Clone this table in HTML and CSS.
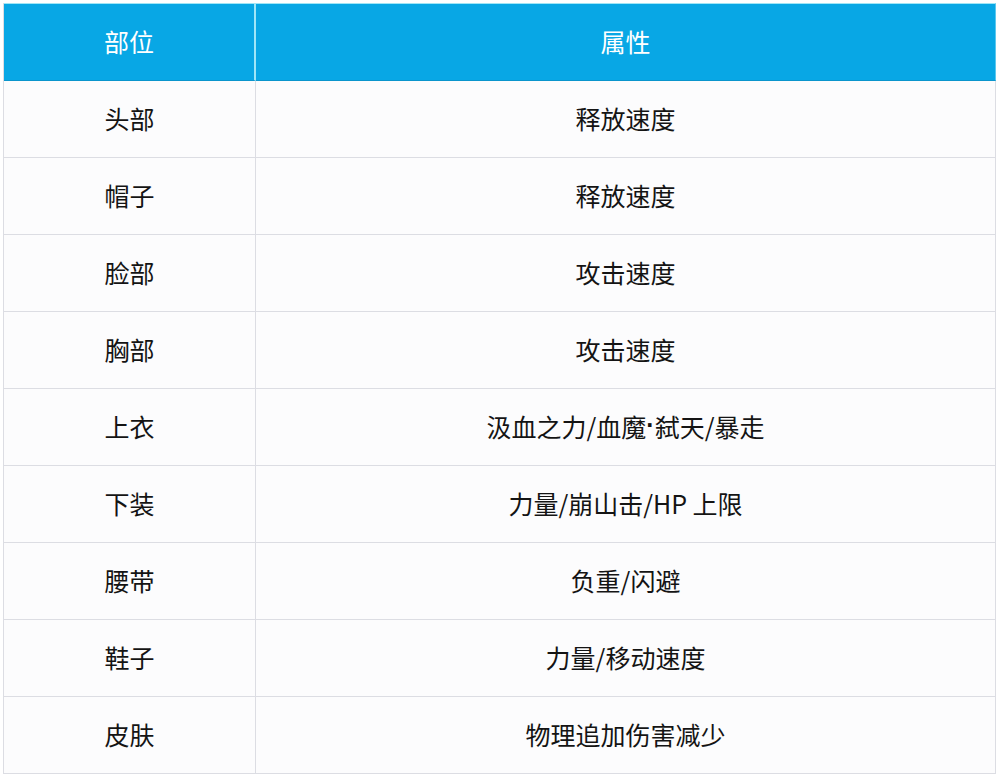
FILE: index.html
```html
<!DOCTYPE html>
<html lang="zh">
<head>
<meta charset="utf-8">
<title>装备属性</title>
<link rel="stylesheet" href="styles.css">
</head>
<body>
<div class="table">
  <div class="cell head">部位</div>
  <div class="cell head">属性</div>
  <div class="cell">头部</div><div class="cell">释放速度</div>
  <div class="cell">帽子</div><div class="cell">释放速度</div>
  <div class="cell">脸部</div><div class="cell">攻击速度</div>
  <div class="cell">胸部</div><div class="cell">攻击速度</div>
  <div class="cell">上衣</div><div class="cell">汲血之力/血魔<span class="dot">·</span>弑天/暴走</div>
  <div class="cell">下装</div><div class="cell">力量/崩山击/HP 上限</div>
  <div class="cell">腰带</div><div class="cell">负重/闪避</div>
  <div class="cell">鞋子</div><div class="cell">力量/移动速度</div>
  <div class="cell">皮肤</div><div class="cell">物理追加伤害减少</div>
</div>
</body>
</html>
```
FILE: styles.css
```css
html, body {
  margin: 0;
  padding: 0;
  background: #ffffff;
}
body {
  padding: 3px;
  font-family: "Noto Sans CJK SC", "Noto Sans", sans-serif;
}
.table {
  display: grid;
  grid-template-columns: 252px 740px;
  grid-template-rows: 78px repeat(9, 77px);
  width: 992px;
  background: #fcfcfd;
  border-left: 1px solid #dcdde3;
  box-sizing: border-box;
}
.cell {
  display: flex;
  align-items: center;
  justify-content: center;
  box-sizing: border-box;
  border-right: 1px solid #dcdde3;
  border-bottom: 1px solid #dcdde3;
  font-size: 25px;
  color: #141414;
  padding-bottom: 3px;
}
.dot {
  font-family: "Liberation Sans", sans-serif;
  font-weight: 700;
}
.head {
  background: #08a7e5;
  color: #ffffff;
  border-top: 1px solid #9fe6f7;
  border-right: 2px solid #9fe6f7;
  border-bottom: 1px solid #0a95cc;
}
.head + .head {
  border-right: 1px solid #5cc8ee;
}
```
